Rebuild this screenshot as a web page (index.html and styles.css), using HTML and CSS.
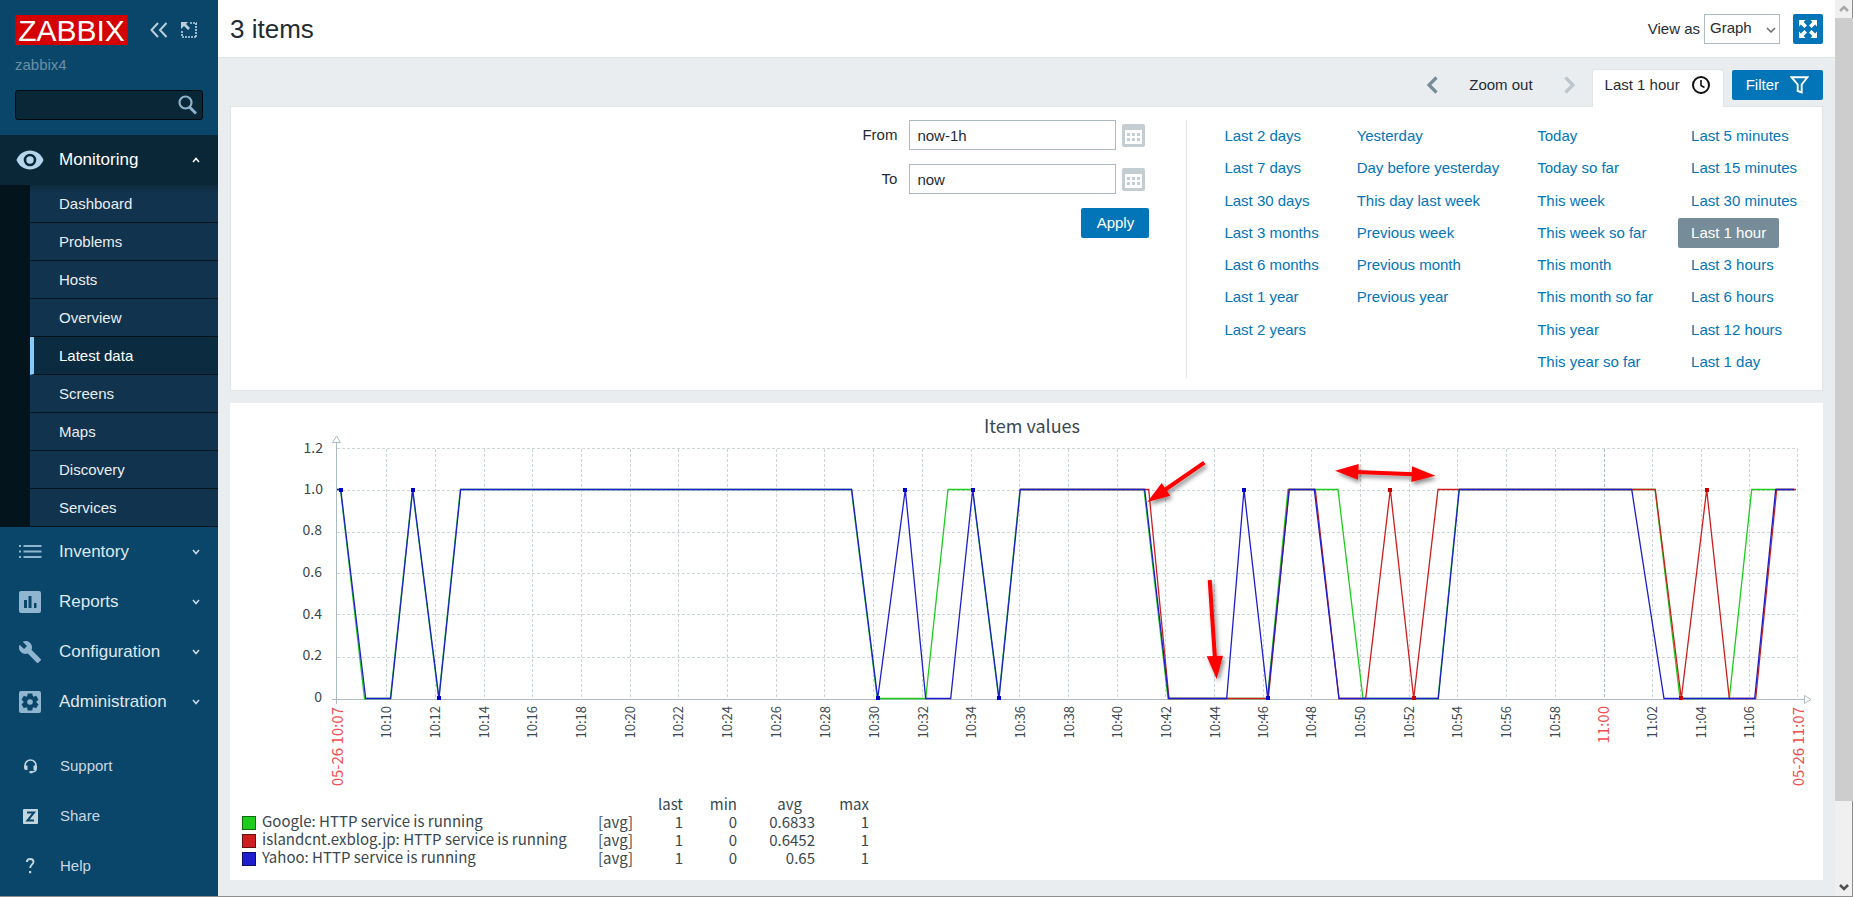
FILE: index.html
```html
<!DOCTYPE html>
<html lang="en">
<head>
<meta charset="utf-8">
<title>3 items</title>
<link rel="stylesheet" href="styles.css">
</head>
<body>
<div class="page">
  <aside class="sidebar">
    <div class="brand">
      <a class="logo" href="#">ZABBIX</a>
      <button class="icon-btn" type="button" aria-label="Collapse sidebar">
        <svg width="18" height="16" viewBox="0 0 18 16" fill="none" stroke="#b9cfdc" stroke-width="2"><path d="M8 1 1.500 8 8 15M16.500 1 10 8l6.500 7"/></svg>
      </button>
      <button class="icon-btn" type="button" aria-label="Hide sidebar">
        <svg width="16" height="16" viewBox="0 0 16 16"><path d="M9 1h7M15 1v14M1 9v6M1 15h15" fill="none" stroke="#b9cfdc" stroke-width="1.700" stroke-dasharray="2 1"/><path d="M0 0h7L5 2l4 4-2 2-4-4-3 3z" fill="#b9cfdc"/></svg>
      </button>
    </div>
    <div class="server">zabbix4</div>
    <form class="search">
      <input type="text" aria-label="Search">
      <button type="button" aria-label="Search">
        <svg width="20" height="20" viewBox="0 0 20 20" fill="none" stroke="#8fb3ca"><circle cx="8.500" cy="7.500" r="6" stroke-width="2.200"/><path d="M12.500 12l6.500 6.500" stroke-width="3"/></svg>
      </button>
    </form>
    <nav>
      <ul class="menu">
        <li>
          <a class="menu-item open" href="#">
            <svg width="30" height="22" viewBox="0 0 30 22"><path d="M1.500 11C4 5 9 1.500 15 1.500S26 5 28.500 11C26 17 21 20.500 15 20.500S4 17 1.500 11z" fill="#b3d6ec"/><circle cx="15" cy="11" r="5" fill="#b3d6ec" stroke="#0a2737" stroke-width="2.600"/></svg>
            <span>Monitoring</span>
            <svg class="caret" width="8" height="6" viewBox="0 0 8 6"><path d="M1 5l3-3.500L7 5" fill="none" stroke="#fff" stroke-width="1.500"/></svg>
          </a>
          <ul class="submenu">
            <li><a href="#">Dashboard</a></li>
            <li><a href="#">Problems</a></li>
            <li><a href="#">Hosts</a></li>
            <li><a href="#">Overview</a></li>
            <li><a class="selected" href="#">Latest data</a></li>
            <li><a href="#">Screens</a></li>
            <li><a href="#">Maps</a></li>
            <li><a href="#">Discovery</a></li>
            <li><a href="#">Services</a></li>
          </ul>
        </li>
        <li><a class="menu-item" href="#">
          <svg width="30" height="24" viewBox="0 0 30 24" fill="#8fb5d0"><path d="M4 5h2v2H4zM8.500 5h18v2h-18zM4 10.500h2v2H4zM8.500 10.500h18v2h-18zM4 16h2v2H4zM8.500 16h18v2h-18z"/></svg>
          <span>Inventory</span>
          <svg class="caret" width="8" height="6" viewBox="0 0 8 6"><path d="M1 1l3 3.500L7 1" fill="none" stroke="#cfdde6" stroke-width="1.500"/></svg></a></li>
        <li><a class="menu-item" href="#">
          <svg width="30" height="24" viewBox="0 0 30 24"><rect x="4" y="1" width="22" height="22" rx="2" fill="#8fb5d0"/><path d="M9 10h3v8H9zM13.500 6h3v12h-3zM19 13h2.500v5H19z" fill="#0a466a"/></svg>
          <span>Reports</span>
          <svg class="caret" width="8" height="6" viewBox="0 0 8 6"><path d="M1 1l3 3.500L7 1" fill="none" stroke="#cfdde6" stroke-width="1.500"/></svg></a></li>
        <li><a class="menu-item" href="#">
          <svg width="30" height="24" viewBox="0 0 24 24" fill="#8fb5d0"><path d="M22.700 19l-9.100-9.100c.9-2.300.4-5-1.500-6.900-2-2-5-2.400-7.400-1.300L9 6 6 9 1.600 4.700C.4 7.100.9 10.100 2.900 12.100c1.900 1.900 4.600 2.400 6.900 1.500l9.100 9.100c.4.4 1 .4 1.400 0l2.300-2.300c.5-.4.500-1.100.1-1.400z"/></svg>
          <span>Configuration</span>
          <svg class="caret" width="8" height="6" viewBox="0 0 8 6"><path d="M1 1l3 3.500L7 1" fill="none" stroke="#cfdde6" stroke-width="1.500"/></svg></a></li>
        <li><a class="menu-item" href="#">
          <svg width="30" height="24" viewBox="0 0 30 24"><rect x="4" y="1" width="22" height="22" rx="2" fill="#8fb5d0"/><g fill="#0a466a"><circle cx="15" cy="12" r="6.500"/><path id="cog" d="M12.700 3.500h4.600l.7 4h-6zM12.700 20.500h4.600l.7-4h-6z"/><use href="#cog" transform="rotate(60 15 12)"/><use href="#cog" transform="rotate(120 15 12)"/></g><circle cx="15" cy="12" r="2.800" fill="#8fb5d0"/></svg>
          <span>Administration</span>
          <svg class="caret" width="8" height="6" viewBox="0 0 8 6"><path d="M1 1l3 3.500L7 1" fill="none" stroke="#cfdde6" stroke-width="1.500"/></svg></a></li>
      </ul>
      <ul class="menu secondary">
        <li><a href="#"><svg width="30" height="16" viewBox="0 0 30 16"><path d="M10 9.500V7.500a5.500 5.500 0 0 1 11 0V11q0 3-5 3" fill="none" stroke="#c3d5df" stroke-width="1.600"/><path d="M9 7.500h3.500V12H11q-2 0-2-2zM18.500 7.500H22V10q0 2-2 2h-1.500zM14.500 13h3v2.200h-3z" fill="#c3d5df"/></svg><span>Support</span></a></li>
        <li><a href="#"><svg width="30" height="16" viewBox="0 0 30 16"><rect x="8" y="1" width="15" height="15" rx="1" fill="#c3d5df"/><path d="M12 4.500h7L12.500 12.500H19" fill="none" stroke="#0a466a" stroke-width="2"/></svg><span>Share</span></a></li>
        <li><a href="#"><svg width="30" height="16" viewBox="0 0 30 16"><path d="M11.800 4q.2-3 3.400-3 3.300 0 3.300 2.900c0 2.300-3.300 2.800-3.300 6.100" fill="none" stroke="#c3d5df" stroke-width="1.900"/><rect x="14" y="13" width="2.200" height="2.200" fill="#c3d5df"/></svg><span>Help</span></a></li>
      </ul>
    </nav>
  </aside>

  <main class="content">
    <header class="title-bar">
      <h1>3 items</h1>
      <div class="controls">
        <label for="view-as">View as</label>
        <div class="select-box">
          <select id="view-as"><option>Graph</option><option>Values</option></select>
          <svg width="10" height="6" viewBox="0 0 10 6"><path d="M1 1l4 4 4-4" fill="none" stroke="#6a6a6a" stroke-width="1.500"/></svg>
        </div>
        <button class="fullscreen" type="button" aria-label="Kiosk mode">
          <svg width="18" height="18" viewBox="0 0 18 18" fill="#fff"><path id="corner" d="M0 0h6.500L4.600 1.900 8 5.400 5.400 8 1.900 4.600 0 6.500z"/><use href="#corner" transform="rotate(90 9 9)"/><use href="#corner" transform="rotate(180 9 9)"/><use href="#corner" transform="rotate(270 9 9)"/></svg>
        </button>
      </div>
    </header>

    <div class="time-bar">
      <button class="arrow" type="button" aria-label="Previous period"><svg width="12" height="18" viewBox="0 0 12 18"><path d="M10.500 1.500 3 9l7.500 7.500" fill="none" stroke="#768d99" stroke-width="3.200"/></svg></button>
      <button class="zoom-out" type="button">Zoom out</button>
      <button class="arrow" type="button" aria-label="Next period" disabled><svg width="12" height="18" viewBox="0 0 12 18"><path d="M1.500 1.500 9 9l-7.500 7.500" fill="none" stroke="#bcc7cd" stroke-width="3.200"/></svg></button>
      <button class="tab" type="button">Last 1 hour <svg width="18" height="18" viewBox="0 0 18 18" fill="none" stroke="#111"><circle cx="9" cy="9" r="8" stroke-width="2"/><path d="M9 4v5.500l3.500 2" stroke-width="1.600"/></svg></button>
      <button class="filter-btn" type="button">Filter <svg width="19" height="18" viewBox="0 0 19 18"><path d="M1.500 1.200h16L11.700 8.500v8l-4-1.500V8.500z" fill="none" stroke="#fff" stroke-width="1.900"/></svg></button>
    </div>

    <section class="time-panel">
      <form class="range">
        <label for="from">From</label>
        <input id="from" type="text" value="now-1h">
        <button class="calendar" type="button" aria-label="Pick start date"><svg width="23" height="23" viewBox="0 0 23 23"><path fill-rule="evenodd" d="M2 0h19a2 2 0 0 1 2 2v19a2 2 0 0 1-2 2H2a2 2 0 0 1-2-2V2a2 2 0 0 1 2-2zM3 6v14h17V6z" fill="#c3cdd2"/><path d="M5 9h3v3H5zM10 9h3v3h-3zM15 9h3v3h-3zM5 14h3v3H5zM10 14h3v3h-3zM15 14h3v3h-3z" fill="#c3cdd2"/></svg></button>
        <label for="to">To</label>
        <input id="to" type="text" value="now">
        <button class="calendar" type="button" aria-label="Pick end date"><svg width="23" height="23" viewBox="0 0 23 23"><path fill-rule="evenodd" d="M2 0h19a2 2 0 0 1 2 2v19a2 2 0 0 1-2 2H2a2 2 0 0 1-2-2V2a2 2 0 0 1 2-2zM3 6v14h17V6z" fill="#c3cdd2"/><path d="M5 9h3v3H5zM10 9h3v3h-3zM15 9h3v3h-3zM5 14h3v3H5zM10 14h3v3h-3zM15 14h3v3h-3z" fill="#c3cdd2"/></svg></button>
        <button class="apply" type="button">Apply</button>
      </form>
      <div class="quick">
        <ul><li><a href="#">Last 2 days</a></li><li><a href="#">Last 7 days</a></li><li><a href="#">Last 30 days</a></li><li><a href="#">Last 3 months</a></li><li><a href="#">Last 6 months</a></li><li><a href="#">Last 1 year</a></li><li><a href="#">Last 2 years</a></li></ul>
        <ul><li><a href="#">Yesterday</a></li><li><a href="#">Day before yesterday</a></li><li><a href="#">This day last week</a></li><li><a href="#">Previous week</a></li><li><a href="#">Previous month</a></li><li><a href="#">Previous year</a></li></ul>
        <ul><li><a href="#">Today</a></li><li><a href="#">Today so far</a></li><li><a href="#">This week</a></li><li><a href="#">This week so far</a></li><li><a href="#">This month</a></li><li><a href="#">This month so far</a></li><li><a href="#">This year</a></li><li><a href="#">This year so far</a></li></ul>
        <ul><li><a href="#">Last 5 minutes</a></li><li><a href="#">Last 15 minutes</a></li><li><a href="#">Last 30 minutes</a></li><li><a class="current" href="#">Last 1 hour</a></li><li><a href="#">Last 3 hours</a></li><li><a href="#">Last 6 hours</a></li><li><a href="#">Last 12 hours</a></li><li><a href="#">Last 1 day</a></li></ul>
      </div>
    </section>

    <section class="graph-panel">
      <svg class="graph" viewBox="0 0 1593 391" role="img" aria-label="Item values">
        <defs>
          <filter id="shadow" x="-30%" y="-30%" width="160%" height="160%"><feDropShadow dx="2" dy="3" stdDeviation="2" flood-opacity=".45"/></filter>
        </defs>
        <text class="g-title" x="802" y="30">Item values</text>
        <path class="grid" d="M107 45.500H1568M107 87.500H1568M107 129.500H1568M107 170.500H1568M107 211.500H1568M107 254.500H1568"/>
        <path class="grid" d="M156.500 46V296M205.500 46V296M254.500 46V296M302.500 46V296M351.500 46V296M400.500 46V296M448.500 46V296M497.500 46V296M546.500 46V296M594.500 46V296M643.500 46V296M692.500 46V296M741.500 46V296M789.500 46V296M838.500 46V296M887.500 46V296M935.500 46V296M984.500 46V296M1033.500 46V296M1081.500 46V296M1130.500 46V296M1179.500 46V296M1227.500 46V296M1276.500 46V296M1325.500 46V296M1422.500 46V296M1471.500 46V296M1519.500 46V296M1567.500 46V296"/>
        <path class="grid major" d="M1374.500 46V296"/>
        <path class="axis" d="M106.500 39V301M102 296.500H1574"/>
        <path class="axis tip" d="M102.500 39.500L106.500 33l4 6.500zM1574.500 292.500v8l6.500-4z"/>
        <g class="series" stroke-width="1.300">
          <path stroke="#1ecc1e" d="M107 86.500H110.500L134.500 295.500H160.300L182.500 86.500 208.700 295.500 230.300 86.500H621.300L647.300 295.500H695.700L718 86.500H742.500L768.700 295.500 790 86.500H914L938 295.500H1037.300L1058 86.500H1108L1133 295.500H1208L1229 86.500H1425L1450 295.500H1499.300L1521.700 86.500H1564"/>
          <path stroke="#cc1e1e" d="M790.300 86.500H918.700L939 295.500H1038.300L1059 86.500H1085.300L1109 295.500H1135.700L1160.300 86.500 1183.700 295.500 1208 86.500H1425.300L1451.300 295.500 1476.700 86.500 1499.300 295.500H1525.700L1546.700 86.500H1566"/>
          <path stroke="#1e1ecc" d="M107 86.500H110.700L135.700 295.500H160.700L182.700 86.500 209 295.500 230.700 86.500H621.700L647.700 295.500 675.300 86.500 695.700 295.500H720.700L742.700 86.500 769 295.500 790.300 86.500H914.700L938.700 295.500H996.700L1014 86.500 1037.700 295.500 1059.300 86.500H1084.300L1109 295.500H1208.300L1229.300 86.500H1401.700L1434 295.500H1524.700L1545.700 86.500H1564"/>
        </g>
        <path fill="#0000c8" d="M109 85h4v4h-4zM181 85h4v4h-4zM207 293h4v4h-4zM646 293h4v4h-4zM673 85h4v4h-4zM741 85h4v4h-4zM767 293h4v4h-4zM1012 85h4v4h-4zM1036 293h4v4h-4z"/>
        <path fill="#c80000" d="M1158 85h4v4h-4zM1182 293h4v4h-4zM1449 293h4v4h-4zM1475 85h4v4h-4z"/>
        <g class="y-labels">
          <text x="93" y="50">1.2</text><text x="93" y="91">1.0</text><text x="92" y="132">0.8</text><text x="92" y="174">0.6</text><text x="92" y="216">0.4</text><text x="92" y="257">0.2</text><text x="92" y="299">0</text>
        </g>
        <g class="x-labels">
          <text transform="translate(161 303) rotate(-90)">10:10</text>
          <text transform="translate(210 303) rotate(-90)">10:12</text>
          <text transform="translate(259 303) rotate(-90)">10:14</text>
          <text transform="translate(307 303) rotate(-90)">10:16</text>
          <text transform="translate(356 303) rotate(-90)">10:18</text>
          <text transform="translate(405 303) rotate(-90)">10:20</text>
          <text transform="translate(453 303) rotate(-90)">10:22</text>
          <text transform="translate(502 303) rotate(-90)">10:24</text>
          <text transform="translate(551 303) rotate(-90)">10:26</text>
          <text transform="translate(600 303) rotate(-90)">10:28</text>
          <text transform="translate(649 303) rotate(-90)">10:30</text>
          <text transform="translate(698 303) rotate(-90)">10:32</text>
          <text transform="translate(746 303) rotate(-90)">10:34</text>
          <text transform="translate(795 303) rotate(-90)">10:36</text>
          <text transform="translate(844 303) rotate(-90)">10:38</text>
          <text transform="translate(892 303) rotate(-90)">10:40</text>
          <text transform="translate(941 303) rotate(-90)">10:42</text>
          <text transform="translate(990 303) rotate(-90)">10:44</text>
          <text transform="translate(1038 303) rotate(-90)">10:46</text>
          <text transform="translate(1086 303) rotate(-90)">10:48</text>
          <text transform="translate(1135 303) rotate(-90)">10:50</text>
          <text transform="translate(1184 303) rotate(-90)">10:52</text>
          <text transform="translate(1232 303) rotate(-90)">10:54</text>
          <text transform="translate(1281 303) rotate(-90)">10:56</text>
          <text transform="translate(1330 303) rotate(-90)">10:58</text>
          <text transform="translate(1427 303) rotate(-90)">11:02</text>
          <text transform="translate(1476 303) rotate(-90)">11:04</text>
          <text transform="translate(1524 303) rotate(-90)">11:06</text>
        </g>
        <g class="x-labels edge">
          <text transform="translate(113 304) rotate(-90)">05-26 10:07</text>
          <text transform="translate(1379 303) rotate(-90)">11:00</text>
          <text transform="translate(1574 304) rotate(-90)">05-26 11:07</text>
        </g>
        <g filter="url(#shadow)" fill="#f00" stroke="#f00">
          <path d="M974.300 59.700L934 87.500M979.700 177L985 256M1126 69L1184 71.300" stroke-width="4"/>
          <path stroke="none" d="M917.300 99L931.700 80l8.600 12.700zM986.700 276l-10-22.700 16.300-.6zM1105 67.700l23.700-6.700-.7 15.700zM1205.300 72.700L1182 63.300l-.7 15.700z"/>
        </g>
      </svg>
      <table class="legend">
        <thead><tr><th class="name"></th><th class="func"></th><th class="last">last</th><th class="w54">min</th><th class="avg">avg</th><th class="w54">max</th></tr></thead>
        <tbody>
          <tr><td><span class="swatch green"></span>Google: HTTP service is running</td><td>[avg]</td><td>1</td><td>0</td><td>0.6833</td><td>1</td></tr>
          <tr><td><span class="swatch red"></span>islandcnt.exblog.jp: HTTP service is running</td><td>[avg]</td><td>1</td><td>0</td><td>0.6452</td><td>1</td></tr>
          <tr><td><span class="swatch blue"></span>Yahoo: HTTP service is running</td><td>[avg]</td><td>1</td><td>0</td><td>0.65</td><td>1</td></tr>
        </tbody>
      </table>
    </section>
  </main>

  <div class="scrollbar" aria-hidden="true">
    <svg width="18" height="18" viewBox="0 0 18 18"><path d="M5 11l4-4 4 4" fill="none" stroke="#a8a8a8" stroke-width="2.500"/></svg>
    <div class="thumb"></div>
    <svg width="18" height="18" viewBox="0 0 18 18"><path d="M5 7l4 4 4-4" fill="none" stroke="#505050" stroke-width="2.500"/></svg>
  </div>
</div>
</body>
</html>
```
FILE: styles.css
```css
* { box-sizing: border-box; }
body {
  margin: 0;
  font: 15px/18px "Liberation Sans", Arial, sans-serif;
  color: #1f2c33;
  background: #e9edf0;
}
ul { list-style: none; margin: 0; padding: 0; }
a { text-decoration: none; color: #0275b8; }
button, input, select { font: inherit; color: inherit; margin: 0; }
button { border: 0; background: none; padding: 0; white-space: nowrap; }
svg { display: block; flex: none; }

.page {
  display: grid;
  grid-template-columns: 218px minmax(0, 1fr) 18px;
  min-height: 100vh;
  border-bottom: 1px solid #8f8f8f;
}

/* Sidebar */
.sidebar { background: #0a466a; color: #fff; }
.brand { display: flex; align-items: center; padding: 15px 20px 0 15px; }
.logo {
  width: 113px;
  height: 30px;
  background: #d40000;
  color: #fff;
  font-size: 30px;
  line-height: 31px;
  text-align: center;
}
.brand .icon-btn:nth-child(2) { margin-left: 22px; }
.brand .icon-btn:nth-child(3) { margin-left: 13px; }
.server { padding: 11px 15px 0; color: #6a8fa6; }
.search {
  display: flex;
  align-items: center;
  height: 30px;
  margin: 16px 15px 15px;
  padding-right: 5px;
  background: #0a2737;
  border: 1px solid #020a0f;
  border-radius: 3px;
}
.search input { flex: 1; min-width: 0; border: 0; background: none; outline: 0; color: #fff; }
.menu-item {
  display: flex;
  align-items: center;
  gap: 14px;
  height: 50px;
  padding: 0 17px 1px 15px;
  color: #dfe8ee;
  font-size: 17px;
  line-height: 20px;
}
.menu-item.open { background: #0a2737; color: #fff; }
.caret { margin-left: auto; margin-right: 1px; }
.submenu {
  padding-left: 30px;
  background: #04141d;
}
.submenu a {
  display: block;
  height: 38px;
  padding: 10px 0 0 29px;
  background: #11334d;
  border-bottom: 1px solid #04141d;
  color: #e8eef2;
}
.submenu li:first-child a { background: linear-gradient(#0e2b3e, #11334d 8px); }
.submenu a.selected {
  padding-left: 25px;
  border-left: 4px solid #84cbfa;
  background: #0b2c40;
  color: #fff;
}
.secondary { padding-top: 14px; }
.secondary a {
  display: flex;
  align-items: center;
  gap: 15px;
  height: 50px;
  padding-left: 15px;
  color: #c9d8e2;
}

/* Header */
.title-bar {
  display: flex;
  justify-content: space-between;
  align-items: center;
  height: 58px;
  padding: 0 12px;
  background: #fff;
  border-bottom: 1px solid #dfe4e7;
}
h1 { margin: 0; font-size: 26px; font-weight: 400; line-height: 30px; }
.controls { display: flex; align-items: center; }
.select-box { position: relative; margin: 0 13px 0 4px; }
.select-box svg { position: absolute; right: 4px; top: 13px; pointer-events: none; }
.select-box select {
  appearance: none;
  display: block;
  width: 76px;
  height: 30px;
  padding: 0 5px 2px;
  border: 1px solid #acbbc2;
  border-radius: 0;
  background: #fff;
}
.fullscreen {
  display: grid;
  place-items: center;
  width: 30px;
  height: 30px;
  border-radius: 2px;
  background: #0275b8;
}

/* Time selector */
.time-bar {
  display: flex;
  justify-content: flex-end;
  align-items: flex-start;
  padding: 11px 12px 0;
  height: 48px;
}
.time-bar .arrow { padding-top: 7px; }
.zoom-out { padding: 7px 31px; }
.tab {
  display: flex;
  gap: 12px;
  align-items: center;
  height: 38px;
  margin-left: 16px;
  padding: 0 13px 7px 12px;
  background: #fff;
  border: 1px solid #dfe4e7;
  border-bottom: 0;
  border-radius: 3px 3px 0 0;
  position: relative;
  z-index: 1;
}
.filter-btn {
  display: flex;
  align-items: center;
  gap: 11px;
  height: 30px;
  margin: 1px 0 0 8px;
  padding: 0 14px;
  border-radius: 2px;
  background: #0275b8;
  color: #fff;
}
.time-panel {
  display: flex;
  justify-content: flex-end;
  margin: 0 12px;
  padding: 13px 12px 12px;
  background: #fff;
  border: 1px solid #dfe4e7;
}
.range {
  display: grid;
  grid-template-columns: auto 207px 33px;
  grid-auto-rows: 30px;
  gap: 14px 0;
  align-items: center;
  align-self: flex-start;
  margin-right: 37px;
}
.range label { padding-right: 12px; text-align: right; }
.range input {
  height: 30px;
  padding: 0 7px;
  border: 1px solid #acbbc2;
  background: #fff;
}
.calendar { padding: 1px 0 0 6px; }
.apply {
  grid-column: 1 / -1;
  justify-self: end;
  width: 68px;
  height: 30px;
  border-radius: 2px;
  background: #0275b8;
  color: #fff;
}
.quick {
  display: flex;
  gap: 12px;
  padding-left: 24px;
  border-left: 1px solid #dfe4e7;
}
.quick ul { display: grid; grid-template-rows: repeat(8, 1fr); height: 258px; align-items: center; }
.quick a {
  display: inline-block;
  padding: 6px 13px;
  border-radius: 2px;
  white-space: nowrap;
}
.quick li { height: 30px; }
.quick .current { background: #768d99; color: #fff; }

/* Graph */
.graph-panel {
  margin: 12px;
  padding-bottom: 14px;
  background: #fff;
  font-family: "Noto Sans CJK JP", "Noto Sans", sans-serif;
  color: #3a474e;
}
.graph { width: 100%; height: auto; fill: #3a474e; }
.g-title { font-size: 18px; text-anchor: middle; }
.grid { fill: none; stroke: #ccd5d9; stroke-dasharray: 3 2; }
.grid.major { stroke: #acbbc2; }
.axis { fill: none; stroke: #acbbc2; }
.axis.tip { fill: #fff; }
.series { fill: none; }
.y-labels { font-size: 14px; text-anchor: end; }
.x-labels { font-size: 13px; text-anchor: end; }
.x-labels.edge { font-size: 15px; fill: #f05050; }
.legend { margin-left: 12px; border-collapse: collapse; font-size: 15px; line-height: 17px; }
.legend th, .legend td { padding: 0; height: 18px; text-align: right; font-weight: 400; white-space: nowrap; }
.legend td:first-child { text-align: left; }
.legend .name { width: 352px; }
.legend .func { width: 39px; }
.legend .last { width: 50px; }
.legend .w54 { width: 54px; }
.legend .avg { width: 78px; padding-right: 13px; }
.swatch {
  display: inline-block;
  width: 14px;
  height: 14px;
  margin-right: 6px;
  border: 1px solid rgba(0, 0, 0, .5);
  vertical-align: middle;
}
.green { background: #1ecc1e; }
.red { background: #cc1e1e; }
.blue { background: #1e1ecc; }

/* Scrollbar */
.scrollbar {
  display: grid;
  grid-template-rows: 18px 91fr 9fr 18px;
  background: #f0f0f0;
  border-right: 1px solid #8f8f8f;
}
.thumb { background: #cdcdcd; }
.scrollbar svg:last-child { grid-row: 4; }
```
